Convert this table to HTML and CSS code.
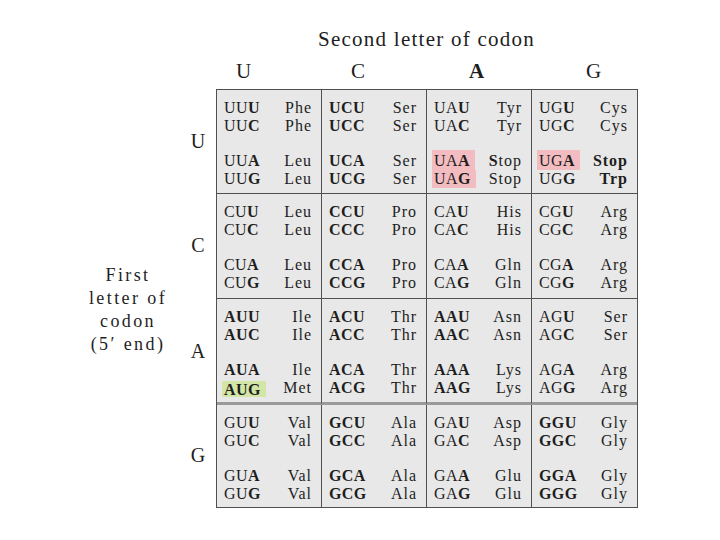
FILE: index.html
```html
<!DOCTYPE html>
<html>
<head>
<meta charset="utf-8">
<link rel="stylesheet" href="styles.css">
</head>
<body>
<div class="page">
  <div class="title">Second letter of codon</div>
  <div class="heads">
    <span class="h h-u">U</span><span class="h h-c">C</span><span class="h h-a">A</span><span class="h h-g">G</span>
  </div>
  <div class="main">
    <div class="label">First<br>letter of<br>codon<br>(5′ end)</div>
    <div class="firsts">
      <div class="fl">U</div><div class="fl">C</div><div class="fl">A</div><div class="fl">G</div>
    </div>
    <div class="grid">
      <!-- Row U -->
      <div class="cell">
        <div class="ln"><span class="cd">UU<b>U</b></span><span class="aa">Phe</span></div>
        <div class="ln"><span class="cd">UU<b>C</b></span><span class="aa">Phe</span></div>
        <div class="ln gap"><span class="cd">UU<b>A</b></span><span class="aa">Leu</span></div>
        <div class="ln"><span class="cd">UU<b>G</b></span><span class="aa">Leu</span></div>
      </div>
      <div class="cell">
        <div class="ln"><span class="cd b">UCU</span><span class="aa">Ser</span></div>
        <div class="ln"><span class="cd b">UCC</span><span class="aa">Ser</span></div>
        <div class="ln gap"><span class="cd b">UCA</span><span class="aa">Ser</span></div>
        <div class="ln"><span class="cd b">UCG</span><span class="aa">Ser</span></div>
      </div>
      <div class="cell">
        <div class="ln"><span class="cd">UA<b>U</b></span><span class="aa">Tyr</span></div>
        <div class="ln"><span class="cd">UA<b>C</b></span><span class="aa">Tyr</span></div>
        <div class="ln gap"><span class="cd stop stop-top">UA<b>A</b></span><span class="aa"><b>S</b>top</span></div>
        <div class="ln"><span class="cd stop">UA<b>G</b></span><span class="aa">Stop</span></div>
      </div>
      <div class="cell last-col">
        <div class="ln"><span class="cd">UG<b>U</b></span><span class="aa">Cys</span></div>
        <div class="ln"><span class="cd">UG<b>C</b></span><span class="aa">Cys</span></div>
        <div class="ln gap"><span class="cd stop stop-top">UG<b>A</b></span><span class="aa b">Stop</span></div>
        <div class="ln"><span class="cd">UG<b>G</b></span><span class="aa b">Trp</span></div>
      </div>
      <!-- Row C -->
      <div class="cell">
        <div class="ln"><span class="cd">CU<b>U</b></span><span class="aa">Leu</span></div>
        <div class="ln"><span class="cd">CU<b>C</b></span><span class="aa">Leu</span></div>
        <div class="ln gap"><span class="cd">CU<b>A</b></span><span class="aa">Leu</span></div>
        <div class="ln"><span class="cd">CU<b>G</b></span><span class="aa">Leu</span></div>
      </div>
      <div class="cell">
        <div class="ln"><span class="cd b">CCU</span><span class="aa">Pro</span></div>
        <div class="ln"><span class="cd b">CCC</span><span class="aa">Pro</span></div>
        <div class="ln gap"><span class="cd b">CCA</span><span class="aa">Pro</span></div>
        <div class="ln"><span class="cd b">CCG</span><span class="aa">Pro</span></div>
      </div>
      <div class="cell">
        <div class="ln"><span class="cd">CA<b>U</b></span><span class="aa">His</span></div>
        <div class="ln"><span class="cd">CA<b>C</b></span><span class="aa">His</span></div>
        <div class="ln gap"><span class="cd">CA<b>A</b></span><span class="aa">Gln</span></div>
        <div class="ln"><span class="cd">CA<b>G</b></span><span class="aa">Gln</span></div>
      </div>
      <div class="cell last-col">
        <div class="ln"><span class="cd">CG<b>U</b></span><span class="aa">Arg</span></div>
        <div class="ln"><span class="cd">CG<b>C</b></span><span class="aa">Arg</span></div>
        <div class="ln gap"><span class="cd">CG<b>A</b></span><span class="aa">Arg</span></div>
        <div class="ln"><span class="cd">CG<b>G</b></span><span class="aa">Arg</span></div>
      </div>
      <!-- Row A -->
      <div class="cell row-a">
        <div class="ln"><span class="cd b">AUU</span><span class="aa">Ile</span></div>
        <div class="ln"><span class="cd b">AUC</span><span class="aa">Ile</span></div>
        <div class="ln gap"><span class="cd b">AUA</span><span class="aa">Ile</span></div>
        <div class="ln"><span class="cd b start">AUG</span><span class="aa">Met</span></div>
      </div>
      <div class="cell row-a">
        <div class="ln"><span class="cd b">ACU</span><span class="aa">Thr</span></div>
        <div class="ln"><span class="cd b">ACC</span><span class="aa">Thr</span></div>
        <div class="ln gap"><span class="cd b">ACA</span><span class="aa">Thr</span></div>
        <div class="ln"><span class="cd b">ACG</span><span class="aa">Thr</span></div>
      </div>
      <div class="cell row-a">
        <div class="ln"><span class="cd b">AAU</span><span class="aa">Asn</span></div>
        <div class="ln"><span class="cd b">AAC</span><span class="aa">Asn</span></div>
        <div class="ln gap"><span class="cd b">AAA</span><span class="aa">Lys</span></div>
        <div class="ln"><span class="cd b">AAG</span><span class="aa">Lys</span></div>
      </div>
      <div class="cell row-a last-col">
        <div class="ln"><span class="cd">AG<b>U</b></span><span class="aa">Ser</span></div>
        <div class="ln"><span class="cd">AG<b>C</b></span><span class="aa">Ser</span></div>
        <div class="ln gap"><span class="cd">AG<b>A</b></span><span class="aa">Arg</span></div>
        <div class="ln"><span class="cd">AG<b>G</b></span><span class="aa">Arg</span></div>
      </div>
      <!-- Row G -->
      <div class="cell last-row">
        <div class="ln"><span class="cd">GU<b>U</b></span><span class="aa">Val</span></div>
        <div class="ln"><span class="cd">GU<b>C</b></span><span class="aa">Val</span></div>
        <div class="ln gap"><span class="cd">GU<b>A</b></span><span class="aa">Val</span></div>
        <div class="ln"><span class="cd">GU<b>G</b></span><span class="aa">Val</span></div>
      </div>
      <div class="cell last-row">
        <div class="ln"><span class="cd b">GCU</span><span class="aa">Ala</span></div>
        <div class="ln"><span class="cd b">GCC</span><span class="aa">Ala</span></div>
        <div class="ln gap"><span class="cd b">GCA</span><span class="aa">Ala</span></div>
        <div class="ln"><span class="cd b">GCG</span><span class="aa">Ala</span></div>
      </div>
      <div class="cell last-row">
        <div class="ln"><span class="cd">GA<b>U</b></span><span class="aa">Asp</span></div>
        <div class="ln"><span class="cd">GA<b>C</b></span><span class="aa">Asp</span></div>
        <div class="ln gap"><span class="cd">GA<b>A</b></span><span class="aa">Glu</span></div>
        <div class="ln"><span class="cd">GA<b>G</b></span><span class="aa">Glu</span></div>
      </div>
      <div class="cell last-row last-col">
        <div class="ln"><span class="cd b">GGU</span><span class="aa">Gly</span></div>
        <div class="ln"><span class="cd b">GGC</span><span class="aa">Gly</span></div>
        <div class="ln gap"><span class="cd b">GGA</span><span class="aa">Gly</span></div>
        <div class="ln"><span class="cd b">GGG</span><span class="aa">Gly</span></div>
      </div>
    </div>
  </div>
</div>
</body>
</html>
```

FILE: styles.css
```css
html, body {
  margin: 0;
  padding: 0;
  background: #ffffff;
}

body {
  font-family: "Liberation Serif", "Times New Roman", serif;
  color: #1e1e1e;
}

.page {
  width: 720px;
  height: 540px;
  padding-top: 27px;
  box-sizing: border-box;
}

.title {
  padding-left: 318px;
  font-size: 21px;
  line-height: 24px;
  height: 24px;
  letter-spacing: 1.25px;
}

.heads {
  display: flex;
  padding-left: 216px;
  margin-top: 8px;
  height: 30px;
  font-size: 21px;
  line-height: 24px;
}

.h {
  display: block;
  width: 105px;
  box-sizing: border-box;
}

.h-u { padding-left: 20px; }
.h-c { padding-left: 30px; }
.h-a { padding-left: 43px; font-weight: bold; }
.h-g { padding-left: 55px; }

.main {
  display: flex;
}

.label {
  width: 186px;
  box-sizing: border-box;
  padding-left: 70px;
  padding-top: 175px;
  text-align: center;
  font-size: 18px;
  line-height: 23px;
  letter-spacing: 2.4px;
}

.firsts {
  width: 24px;
  margin-right: 6px;
  display: grid;
  grid-template-rows: 104px 105px 106px 102px;
  font-size: 20px;
}

.fl {
  display: flex;
  align-items: center;
  justify-content: center;
}

.grid {
  width: 422px;
  box-sizing: border-box;
  border: 1px solid #505050;
  background: #e8e8e8;
  display: grid;
  grid-template-columns: repeat(4, 105px);
  grid-template-rows: 104px 105px 106px 102px;
}

.cell {
  box-sizing: border-box;
  border-right: 1px solid #505050;
  border-bottom: 1px solid #505050;
  padding: 9px 9px 0 7px;
}

.cell.row-a {
  border-bottom: 3px solid #9a9a9a;
}

.cell.last-col {
  border-right: none;
}

.cell.last-row {
  border-bottom: none;
}

.ln {
  display: flex;
  justify-content: space-between;
  height: 18px;
  line-height: 18px;
  font-size: 16px;
}

.ln.gap {
  margin-top: 17px;
}

.cd {
  display: inline-block;
  letter-spacing: 0.4px;
}

.aa {
  display: inline-block;
  letter-spacing: 1px;
}

.b {
  font-weight: bold;
}

.stop {
  background: #f2bcc0;
  padding: 0 5px 0 2px;
  margin: 0 0 0 -2px;
}

.stop-top {
  box-shadow: 0 -2px 0 #f2bcc0;
}

.start {
  background: #d3e6a6;
  padding: 0 5px 0 2px;
  margin: 0 0 0 -2px;
  height: 16px;
  line-height: 17px;
  align-self: flex-end;
}
```
